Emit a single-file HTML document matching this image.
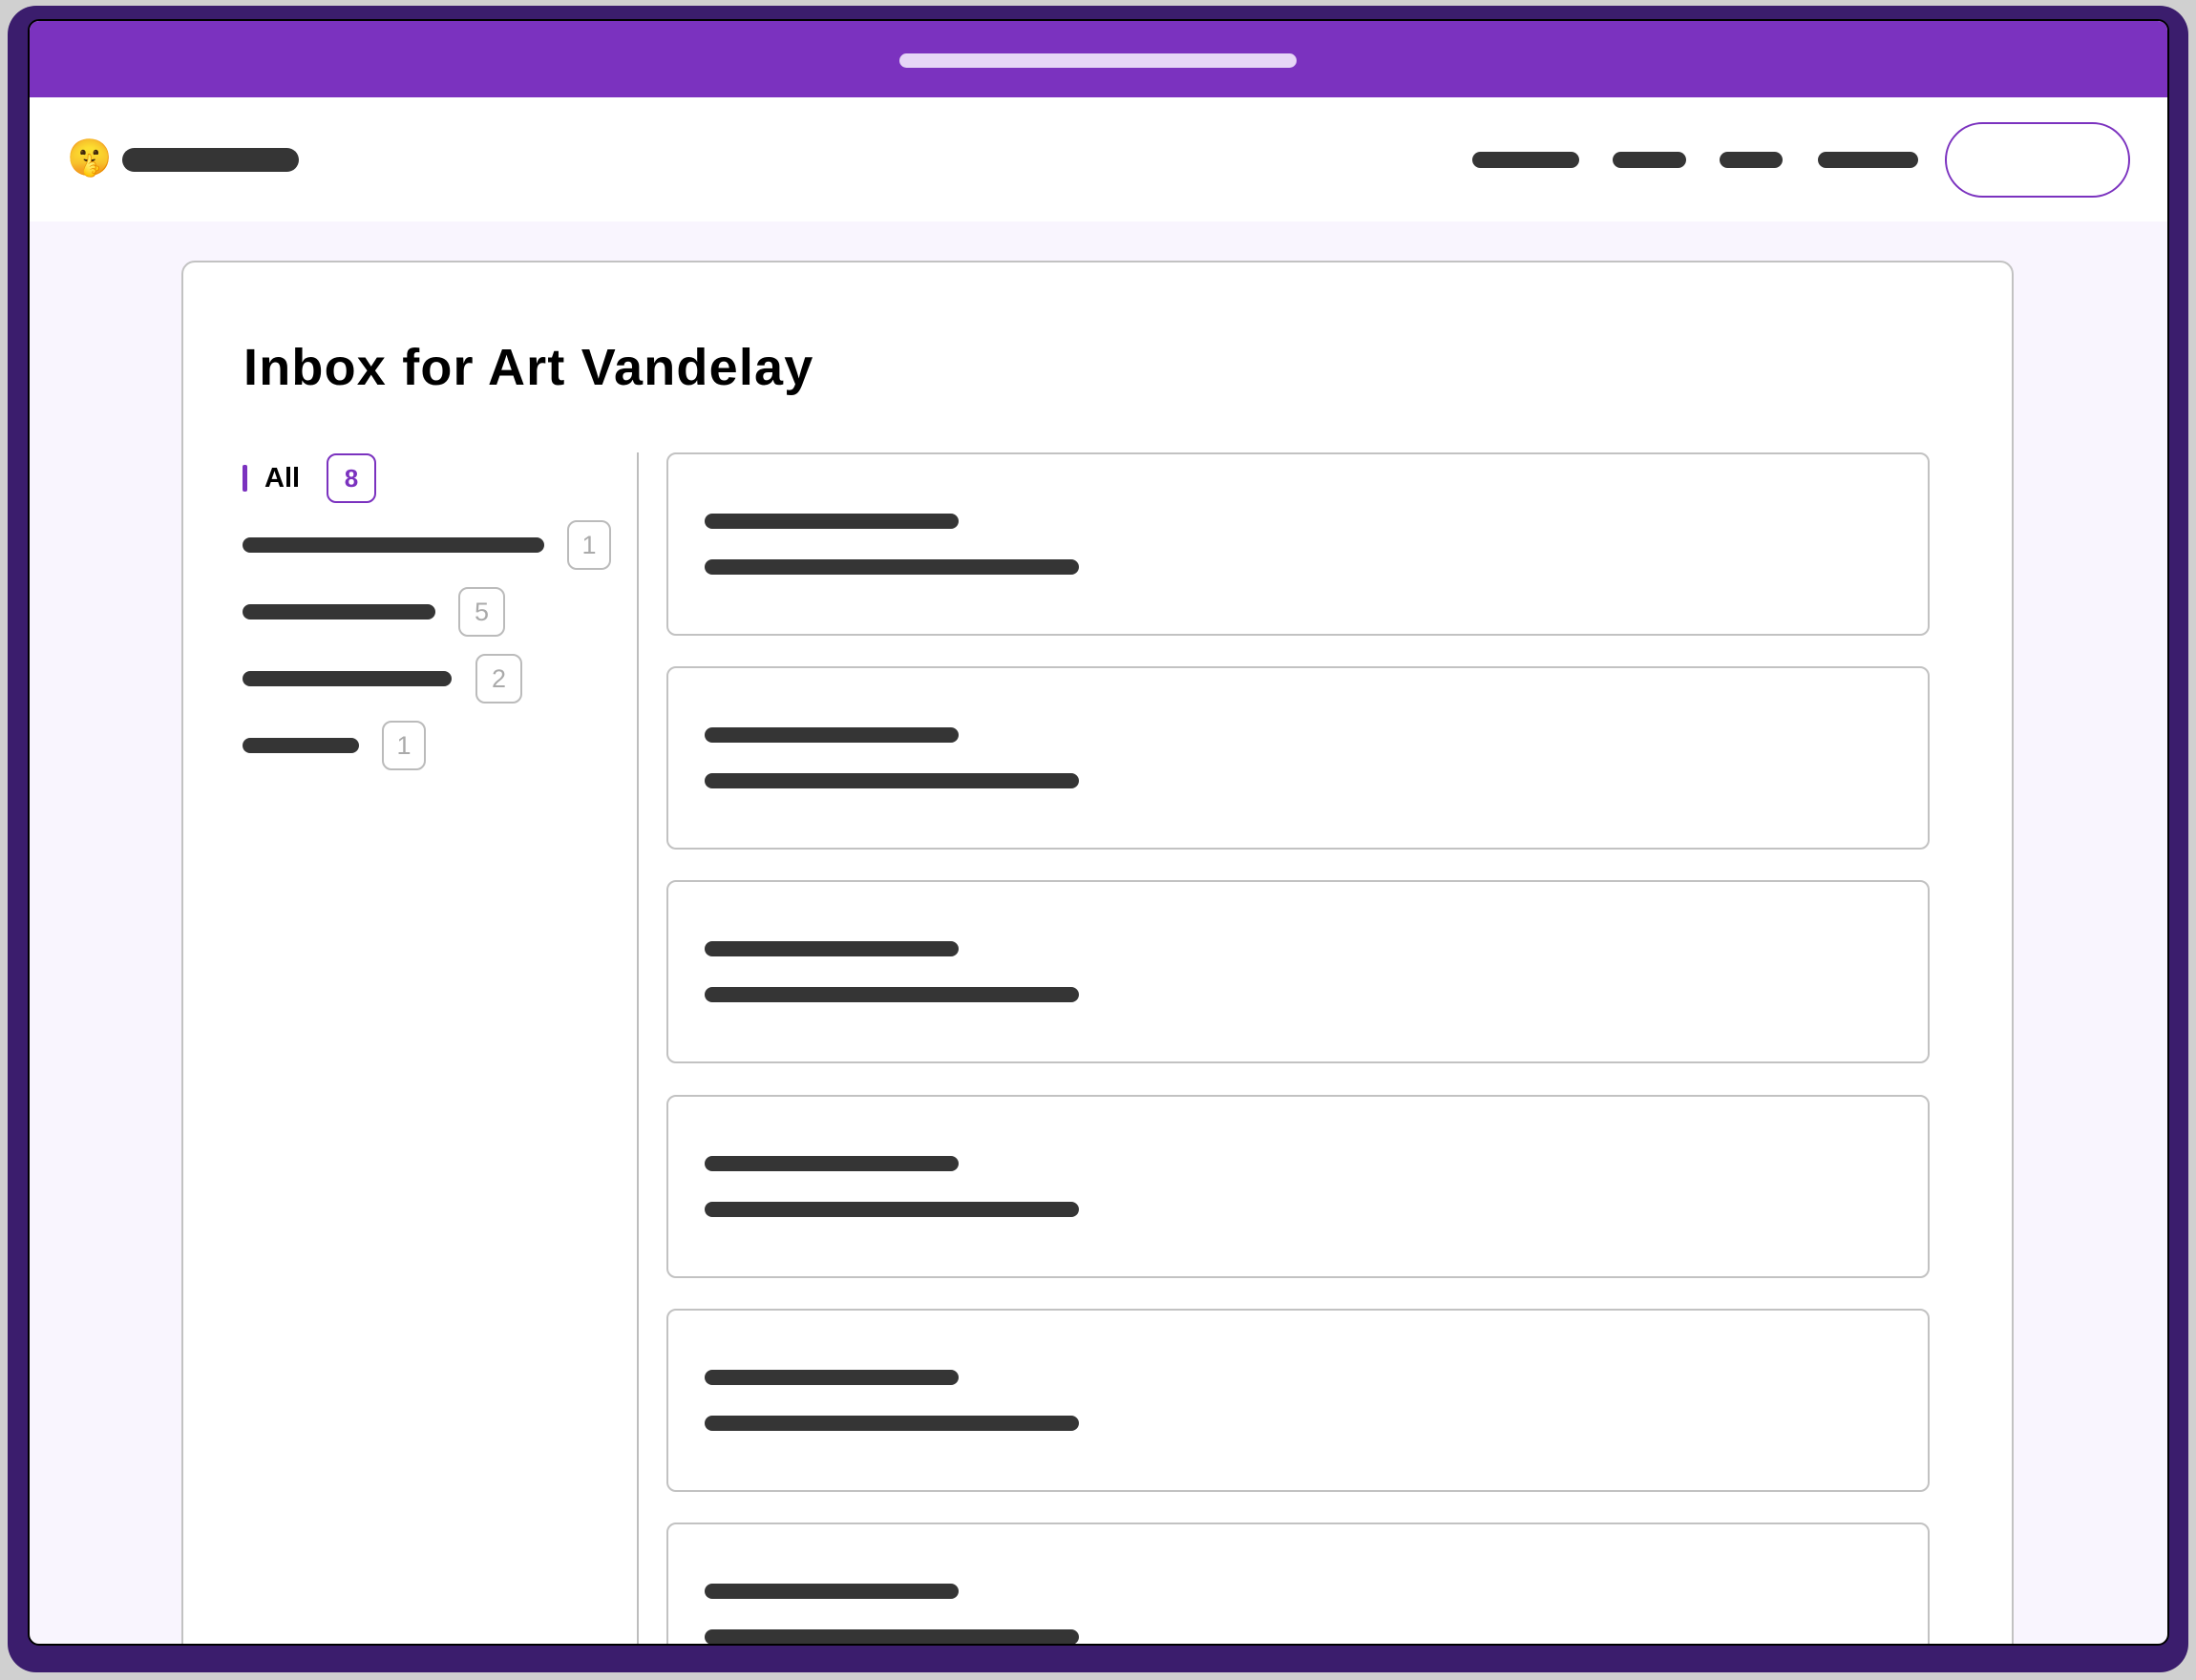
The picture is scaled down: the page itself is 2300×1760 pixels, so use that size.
<!DOCTYPE html>
<html><head><meta charset="utf-8"><style>
*{margin:0;padding:0;box-sizing:border-box}
html,body{width:2300px;height:1760px;overflow:hidden}
body{background:#d0d0d0;position:relative;font-family:"Liberation Sans",sans-serif}
.shadow{position:absolute;left:8px;top:6px;width:2284px;height:1746px;background:#3b1d6d;border-radius:30px}
.win{position:absolute;left:29px;top:20px;width:2243px;height:1704px;background:#f9f5fe;border:2px solid #000;border-radius:12px;overflow:hidden}
.a{position:absolute}
.bar{position:absolute;background:#353535;border-radius:9px}
.gb{position:absolute;border:2px solid #bbb;border-radius:10px;color:#aaa;font-size:27px;display:flex;align-items:center;justify-content:center;background:#fff}
.card{position:absolute;left:667px;width:1323px;height:192px;border:2px solid #c2c2c2;border-radius:10px;background:#fff}
</style></head><body>
<div class="shadow"></div>
<div class="win">
  <div class="a" style="left:0;top:0;width:100%;height:80px;background:#7b32bf"></div>
  <div class="a" style="left:911px;top:34px;width:416px;height:15px;border-radius:8px;background:#e6d6f6"></div>
  <div class="a" style="left:0;top:80px;width:100%;height:130px;background:#fff"></div>
  <div class="a" style="left:39px;top:121px;font-size:38px;line-height:46px;font-family:'Noto Color Emoji','DejaVu Sans',sans-serif">🤫</div>
  <div class="bar" style="left:97px;top:133px;width:185px;height:25px;border-radius:13px"></div>
  <div class="bar" style="left:1511px;top:137px;width:112px;height:17px"></div>
  <div class="bar" style="left:1658px;top:137px;width:77px;height:17px"></div>
  <div class="bar" style="left:1770px;top:137px;width:66px;height:17px"></div>
  <div class="bar" style="left:1873px;top:137px;width:105px;height:17px"></div>
  <div class="a" style="left:2006px;top:106px;width:194px;height:79px;border:2px solid #7b32bf;border-radius:40px"></div>

  <div class="a" style="left:159px;top:251px;width:1919px;height:1470px;background:#fff;border:2px solid #c2c2c2;border-radius:14px">
    <div class="a" style="left:63px;top:80px;font-size:54px;font-weight:bold;letter-spacing:1.2px;color:#000;white-space:nowrap;line-height:60px">Inbox for Art Vandelay</div>
    <div class="a" style="left:62px;top:212px;width:5px;height:28px;background:#7b32bf;border-radius:2px"></div>
    <div class="a" style="left:85px;top:208px;font-size:29px;font-weight:bold;color:#000;line-height:36px">All</div>
    <div class="a" style="left:150px;top:200px;width:52px;height:52px;border:2px solid #7b32bf;border-radius:10px;color:#7b32bf;font-size:26px;font-weight:bold;display:flex;align-items:center;justify-content:center">8</div>
    <div class="bar" style="left:62px;top:288px;width:316px;height:16px;border-radius:8px"></div>
    <div class="gb" style="left:402px;top:270px;width:46px;height:52px">1</div>
    <div class="bar" style="left:62px;top:358px;width:202px;height:16px;border-radius:8px"></div>
    <div class="gb" style="left:288px;top:340px;width:49px;height:52px">5</div>
    <div class="bar" style="left:62px;top:428px;width:219px;height:16px;border-radius:8px"></div>
    <div class="gb" style="left:306px;top:410px;width:49px;height:52px">2</div>
    <div class="bar" style="left:62px;top:498px;width:122px;height:16px;border-radius:8px"></div>
    <div class="gb" style="left:208px;top:480px;width:46px;height:52px">1</div>
    <div class="a" style="left:475px;top:199px;width:2px;height:1300px;background:#bdbdbd"></div>
  </div>

  <div class="card" style="top:452px"><div class="bar" style="left:38px;top:62px;width:266px;height:16px;border-radius:8px"></div><div class="bar" style="left:38px;top:110px;width:392px;height:16px;border-radius:8px"></div></div>
  <div class="card" style="top:676px"><div class="bar" style="left:38px;top:62px;width:266px;height:16px;border-radius:8px"></div><div class="bar" style="left:38px;top:110px;width:392px;height:16px;border-radius:8px"></div></div>
  <div class="card" style="top:900px"><div class="bar" style="left:38px;top:62px;width:266px;height:16px;border-radius:8px"></div><div class="bar" style="left:38px;top:110px;width:392px;height:16px;border-radius:8px"></div></div>
  <div class="card" style="top:1125px"><div class="bar" style="left:38px;top:62px;width:266px;height:16px;border-radius:8px"></div><div class="bar" style="left:38px;top:110px;width:392px;height:16px;border-radius:8px"></div></div>
  <div class="card" style="top:1349px"><div class="bar" style="left:38px;top:62px;width:266px;height:16px;border-radius:8px"></div><div class="bar" style="left:38px;top:110px;width:392px;height:16px;border-radius:8px"></div></div>
  <div class="card" style="top:1573px;height:140px"><div class="bar" style="left:38px;top:62px;width:266px;height:16px;border-radius:8px"></div><div class="bar" style="left:38px;top:110px;width:392px;height:16px;border-radius:8px"></div></div>
</div>
</body></html>
